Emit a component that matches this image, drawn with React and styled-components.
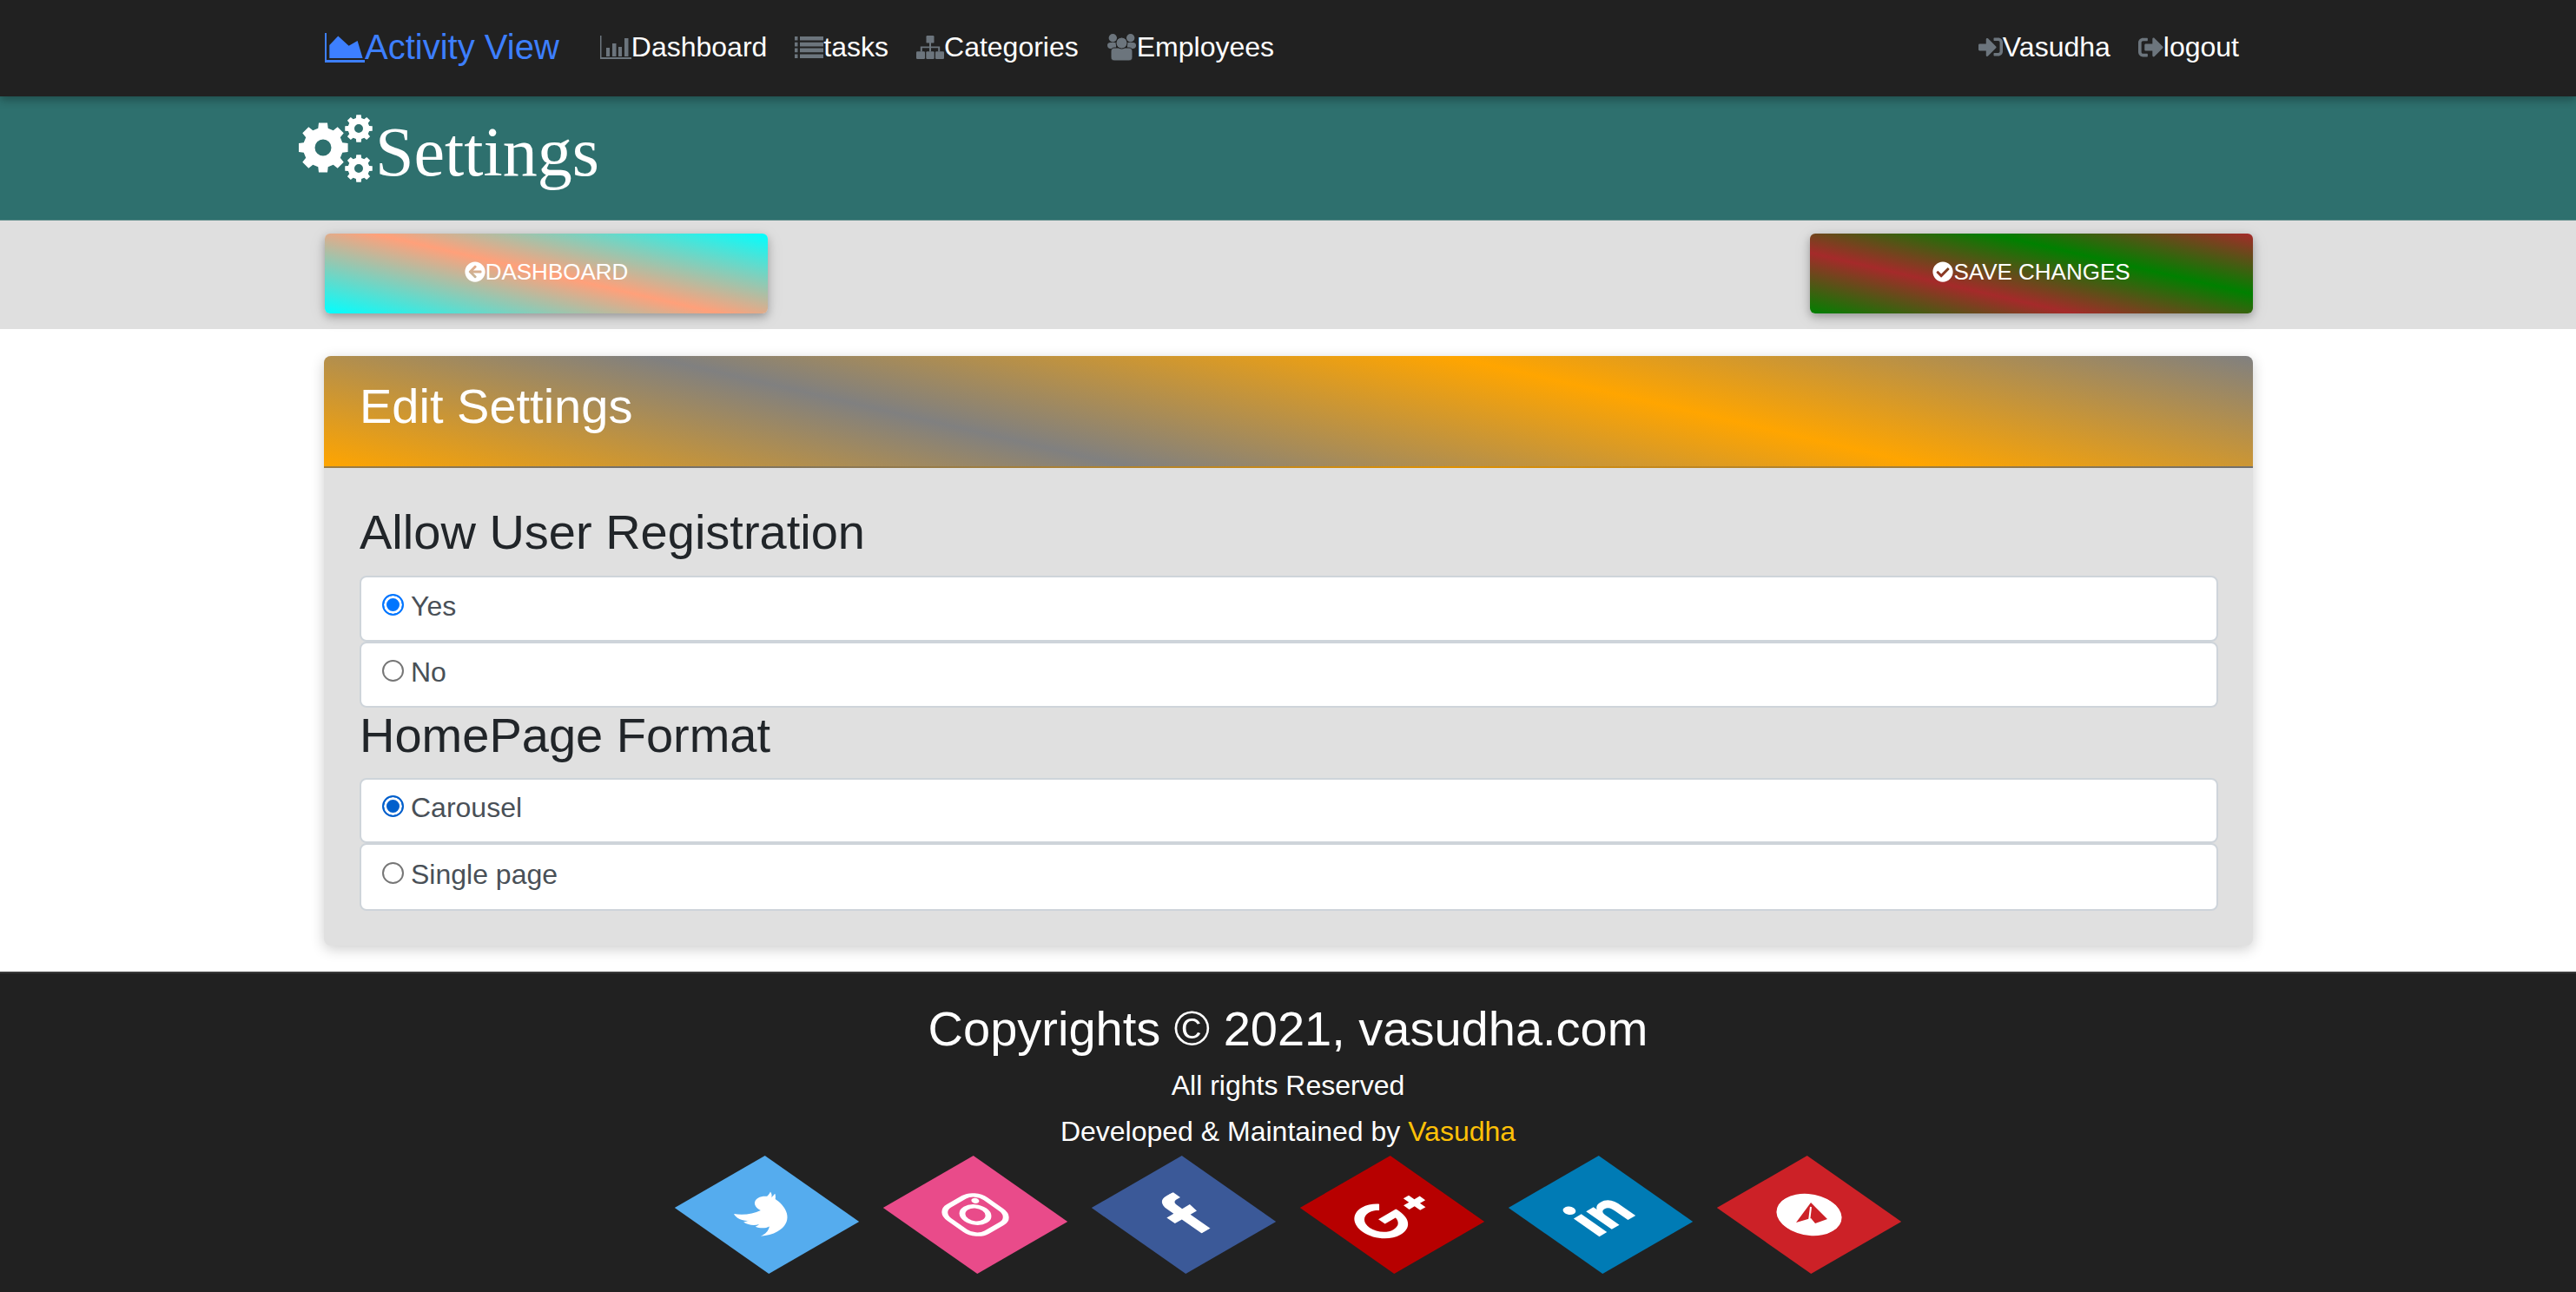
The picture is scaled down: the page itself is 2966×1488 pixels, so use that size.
import React from "react";
import styled, { createGlobalStyle } from "styled-components";
import {
  FaSignInAlt, FaSignOutAlt, FaArrowCircleLeft, FaCheckCircle,
  FaTwitter, FaFacebookF, FaGooglePlusG, FaLinkedinIn,
} from "react-icons/fa";

const Global = createGlobalStyle`
  html, body { margin: 0; padding: 0; background: #fff; }
  body { font-family: "Liberation Sans", Arial, sans-serif; font-size: 32px; line-height: 1.5; color: #212529; }
  * { box-sizing: border-box; }
`;

const Container = styled.div`
  width: 2280px;
  margin-left: 344px;
  padding: 0 ${(p) => (p.$flush ? 0 : 30)}px;
  display: flex;
  align-items: center;
  justify-content: space-between;
`;

const Navbar = styled.nav`
  position: relative;
  z-index: 2;
  height: 111px;
  background: #212121;
  display: flex;
  align-items: center;
  box-shadow: 0 4px 10px rgba(0, 0, 0, 0.3);
  padding-bottom: 3px;
`;
const NavGroup = styled.div`
  display: flex;
  align-items: center;
`;
const Brand = styled.a`
  display: flex;
  align-items: center;
  font-size: 40px;
  line-height: 60px;
  color: #3d7fff;
  margin-right: 31px;
  svg { margin-top: 2px; }
`;
const NavLink = styled.a`
  display: flex;
  align-items: center;
  padding: 0 16px;
  color: #fff;
  font-size: 32px;
  line-height: 48px;
  white-space: nowrap;
  svg { color: #6c757d; fill: currentColor; flex: none; }
`;

const TitleBand = styled.header`
  height: 143px;
  background: #2e706e;
  padding-top: 16px;
  border-bottom: 1px solid #5c8a88;
`;
const PageTitle = styled.h1`
  margin: 0;
  display: flex;
  align-items: center;
  width: 100%;
  font-family: "Liberation Serif", "Times New Roman", serif;
  font-weight: 400;
  font-size: 80px;
  line-height: 96px;
  color: #fff;
  svg { flex: none; margin-top: -8px; }
`;

const ActionBand = styled.div`
  height: 125px;
  background: #dfdfdf;
  padding-top: 15px;
`;
const ActionButton = styled.a`
  width: 510px;
  height: 92px;
  border-radius: 6px;
  display: flex;
  align-items: center;
  justify-content: center;
  padding-bottom: 4px;
  color: #fff;
  font-size: 26px;
  line-height: 40px;
  background: ${(p) => p.$bg};
  box-shadow: 0 4px 10px rgba(0, 0, 0, 0.25), 0 4px 20px rgba(0, 0, 0, 0.1);
  svg { flex: none; }
`;

const Main = styled.main`
  padding: 31px 0 30px;
  background: #fff;
`;
const Card = styled.section`
  width: 2221px;
  margin-left: 373px;
  border-radius: 8px;
  background: #e0e0e0;
  box-shadow: 0 4px 16px rgba(0, 0, 0, 0.2);
  overflow: hidden;
`;
const CardHeader = styled.h3`
  margin: 0;
  height: 129px;
  padding: 24px 41px 0;
  font-weight: 400;
  font-size: 56px;
  line-height: 67px;
  color: #fff;
  background: linear-gradient(13deg, orange, gray, orange, gray);
  border-bottom: 2px solid rgba(0, 0, 0, 0.125);
`;
const CardBody = styled.div`
  padding: 40px 40px 40px 41px;
`;
const GroupTitle = styled.h3`
  margin: ${(p) => p.$mt}px 0 ${(p) => p.$mb}px;
  font-weight: 400;
  font-size: 56px;
  line-height: 67px;
  color: #212529;
`;
const OptionRow = styled.label`
  display: flex;
  align-items: center;
  height: ${(p) => p.$h}px;
  padding: 0 24px 7px;
  background: #fff;
  border: 2px solid #ced4da;
  border-radius: 8px;
  color: #495057;
  font-size: 32px;
  line-height: 48px;
`;
const Radio = styled.input`
  appearance: none;
  width: 25px;
  height: 25px;
  flex: none;
  margin: -3px 8px 0 0;
  border-radius: 50%;
  border: 2px solid #767676;
  background: #fff;
  &:checked {
    border-color: ${(p) => p.$accent};
    background: ${(p) => p.$accent};
    box-shadow: inset 0 0 0 3px #fff;
    outline: none;
  }
`;

const Footer = styled.footer`
  height: 369px;
  background: #212121;
  border-top: 2px solid #3a3a3a;
  padding-top: 30px;
  color: #fff;
  text-align: center;
  overflow: hidden;
`;
const Copyright = styled.h2`
  margin: 0 0 8px;
  font-weight: 400;
  font-size: 56px;
  line-height: 67px;
`;
const FooterLine = styled.p`
  margin: 0 0 5px;
  font-size: 32px;
  line-height: 48px;
`;
const Gold = styled.span`
  color: #ffc107;
`;
const SocialList = styled.ul`
  list-style: none;
  margin: 12px 0 0;
  padding: 0;
  display: flex;
  justify-content: center;
  gap: 120px;
`;
const SocialTile = styled.li`
  width: 120px;
  height: 120px;
  flex: none;
  display: flex;
  align-items: center;
  justify-content: center;
  background: ${(p) => p.$bg};
  color: #fff;
  transform: rotate(-30deg) skew(25deg);
`;

const AreaIcon = () => (
  <svg width="46" height="34" viewBox="0 0 46 34" aria-hidden="true">
    <path fill="#3d7fff" d="M0 0h2v31h44v3H0z" />
    <path fill="#3d7fff" d="M5.3 29V14L15.3 3.4 27.6 14.7 37.6 9l6 20z" />
  </svg>
);
const BarsIcon = () => (
  <svg width="36" height="27" viewBox="0 0 36 27" aria-hidden="true">
    <path d="M0 0h1.5v25H37v2H0z" />
    <path d="M7 14h4v10H7zM14 9h4.5v15H14zM21 13h4v11h-4zM28 3h4.5v21H28z" />
  </svg>
);
const ListIcon = () => (
  <svg width="33" height="25" viewBox="0 0 33 25" aria-hidden="true">
    <path d="M0 0h3.5v4.6H0zM0 6.8h3.5v4.6H0zM0 13.6h3.5v4.6H0zM0 20.4h3.5V25H0z" />
    <path d="M6 0h27v4.6H6zM6 6.8h27v4.6H6zM6 13.6h27v4.6H6zM6 20.4h27V25H6z" />
  </svg>
);
const SitemapIcon = () => (
  <svg width="32" height="27" viewBox="0 0 32 27" aria-hidden="true">
    <rect x="11.5" y="0" width="9" height="8.6" rx="1.2" />
    <rect x="0" y="18.3" width="10" height="8.7" rx="1.2" />
    <rect x="11.3" y="18.3" width="9.4" height="8.7" rx="1.2" />
    <rect x="22" y="18.3" width="10" height="8.7" rx="1.2" />
    <path d="M15 8h2v4.4h10.2v6h-2v-4.2H17v4.2h-2v-4.2H6.800v4.2h-2v-6H15z" />
  </svg>
);
const UsersIcon = () => (
  <svg width="35" height="31" viewBox="0 0 33 31" aria-hidden="true">
    <circle cx="6.300" cy="4.700" r="4.700" />
    <circle cx="26.700" cy="4.700" r="4.700" />
    <path d="M0 13c0-2 1.500-3 3.500-3h6.500v7H3.500C1.500 17 0 15.500 0 13zM33 13c0-2-1.500-3-3.500-3H23v7h6.500c2 0 3.500-1.500 3.500-3z" />
    <path stroke="#212121" strokeWidth="1" d="M8 16h17c2.500 0 4 1.800 4 4v7c0 2.500-1.500 4-4 4H8c-2.500 0-4-1.500-4-4v-7c0-2.200 1.500-4 4-4z" />
    <circle cx="16.500" cy="10.500" r="6.500" stroke="#212121" strokeWidth="1" />
  </svg>
);

function gearPath(cx, cy, rOuter, rRoot, rHole, teeth) {
  const step = (Math.PI * 2) / teeth;
  const pts = [];
  for (let i = 0; i < teeth; i += 1) {
    const a = i * step;
    [
      [rRoot, a - step * 0.32],
      [rOuter, a - step * 0.22],
      [rOuter, a + step * 0.22],
      [rRoot, a + step * 0.32],
    ].forEach(([r, t]) => {
      pts.push(`${(cx + r * Math.sin(t)).toFixed(2)} ${(cy - r * Math.cos(t)).toFixed(2)}`);
    });
  }
  const hole = `M${cx - rHole} ${cy}a${rHole} ${rHole} 0 1 0 ${rHole * 2} 0a${rHole} ${rHole} 0 1 0 ${-rHole * 2} 0z`;
  return `M${pts.join("L")}z${hole}`;
}

const CogsIcon = () => (
  <svg width="88" height="78" viewBox="0 0 88 78" fill="#fff" fillRule="evenodd" aria-hidden="true">
    <path d={gearPath(28, 38, 29, 23, 9.5, 8)} />
    <path d={gearPath(69, 16, 16, 12.5, 5, 8)} />
    <path d={gearPath(69, 62, 16, 12.5, 5, 8)} />
  </svg>
);

const InstagramIcon = () => (
  <svg width="60" height="60" viewBox="-30 -30 60 60" aria-hidden="true">
    <rect x="-24" y="-24" width="48" height="48" rx="14" fill="none" stroke="#fff" strokeWidth="5.500" />
    <circle r="12" fill="none" stroke="#fff" strokeWidth="5.500" />
    <circle cx="14.500" cy="-14" r="3.600" fill="#fff" />
  </svg>
);
const PlaneDiscIcon = () => (
  <svg width="60" height="60" viewBox="-30 -30 60 60" aria-hidden="true">
    <circle r="30" fill="#fff" />
    <path fill="#cc2127" d="M13.900-11.100 8.800 14.800-4.600 12.200-2.300 4.500-17.600 .3z" />
    <path stroke="#fff" strokeWidth="1.600" fill="none" d="M9.400-6.800-6.300 6.100" />
  </svg>
);

const greenBrown = "linear-gradient(13deg, green, brown, green, brown)";
const cyanSalmon = "linear-gradient(13deg, cyan, lightsalmon, cyan)";

const options1 = [
  { label: "Yes", checked: true, h: 76, accent: "#0075ff" },
  { label: "No", checked: false, h: 76, accent: "#0075ff" },
];
const options2 = [
  { label: "Carousel", checked: true, h: 75, accent: "#005fcc" },
  { label: "Single page", checked: false, h: 78, accent: "#005fcc" },
];
const socials = [
  ["#55acee", <FaTwitter size={55} key="t" />],
  ["#e94b8a", <InstagramIcon key="i" />],
  ["#3b5998", <FaFacebookF size={58} key="f" />],
  ["#b70000", <FaGooglePlusG size={82} key="g" />],
  ["#007bb5", <FaLinkedinIn size={56} key="l" />],
  ["#cc2127", <PlaneDiscIcon key="p" />],
];

function Option({ group, opt }) {
  return (
    <OptionRow $h={opt.h}>
      <Radio type="radio" name={group} defaultChecked={opt.checked} $accent={opt.accent} />
      {opt.label}
    </OptionRow>
  );
}

export default function App() {
  return (
    <>
      <Global />
      <Navbar>
        <Container>
          <NavGroup>
            <Brand><AreaIcon />Activity View</Brand>
            <NavLink><BarsIcon />Dashboard</NavLink>
            <NavLink><ListIcon />tasks</NavLink>
            <NavLink><SitemapIcon />Categories</NavLink>
            <NavLink><UsersIcon />Employees</NavLink>
          </NavGroup>
          <NavGroup>
            <NavLink><FaSignInAlt size={28} />Vasudha</NavLink>
            <NavLink><FaSignOutAlt size={29} />logout</NavLink>
          </NavGroup>
        </Container>
      </Navbar>
      <TitleBand>
        <Container $flush>
          <PageTitle><CogsIcon />Settings</PageTitle>
        </Container>
      </TitleBand>
      <ActionBand>
        <Container>
          <ActionButton $bg={cyanSalmon}><FaArrowCircleLeft size={24} />DASHBOARD</ActionButton>
          <ActionButton $bg={greenBrown}><FaCheckCircle size={24} />SAVE CHANGES</ActionButton>
        </Container>
      </ActionBand>
      <Main>
        <Card>
          <CardHeader>Edit Settings</CardHeader>
          <CardBody>
            <GroupTitle $mt={0} $mb={17}>Allow User Registration</GroupTitle>
            {options1.map((o) => <Option key={o.label} group="reg" opt={o} />)}
            <GroupTitle $mt={-2} $mb={16}>HomePage Format</GroupTitle>
            {options2.map((o) => <Option key={o.label} group="home" opt={o} />)}
          </CardBody>
        </Card>
      </Main>
      <Footer>
        <Copyright>Copyrights © 2021, vasudha.com</Copyright>
        <FooterLine>All rights Reserved</FooterLine>
        <FooterLine>Developed &amp; Maintained by <Gold>Vasudha</Gold></FooterLine>
        <SocialList>
          {socials.map(([bg, icon], i) => <SocialTile key={i} $bg={bg}>{icon}</SocialTile>)}
        </SocialList>
      </Footer>
    </>
  );
}
